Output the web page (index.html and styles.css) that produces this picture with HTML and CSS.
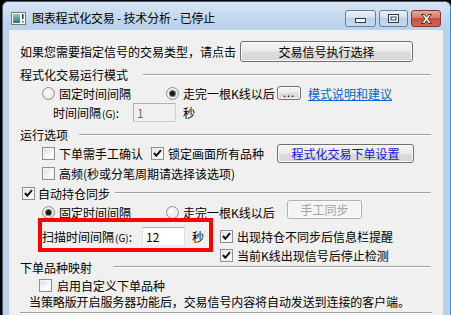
FILE: index.html
```html
<!DOCTYPE html>
<html lang="zh-CN">
<head>
  <meta charset="UTF-8">
  <title>图表程式化交易 - 技术分析 - 已停止</title>
  <link rel="stylesheet" href="styles.css">
</head>
<body>

  <div class="window">
    <!-- 标题栏 -->
    <div class="titlebar">
      <svg class="app-icon" width="15" height="13" viewBox="0 0 15 13">
        <defs>
          <linearGradient id="ig" x1="0" y1="0" x2="0" y2="1">
            <stop offset="0" stop-color="#8fd0a0"/>
            <stop offset="1" stop-color="#1f7a8c"/>
          </linearGradient>
        </defs>
        <rect x="0.5" y="0.5" width="14" height="12" fill="#fff" stroke="#7a7a7a"/>
        <rect x="2" y="2" width="7" height="9" fill="url(#ig)"/>
        <rect x="11" y="2" width="1.5" height="5" fill="#333"/>
        <rect x="11" y="9" width="1.5" height="1.5" fill="#c33"/>
      </svg>
      <span class="title">图表程式化交易 - 技术分析 - 已停止</span>
      <div class="caption-btns">
        <div class="cap cap-min">
          <svg width="31" height="17" viewBox="0 0 31 17"><rect x="10.5" y="8.5" width="10" height="4" fill="#fff" stroke="#2b3b52"/></svg>
        </div>
        <div class="cap cap-max">
          <svg width="29" height="17" viewBox="0 0 29 17"><rect x="9.5" y="4.5" width="10" height="8" fill="#fff" stroke="#2b3b52"/><rect x="12" y="7" width="5" height="3" fill="none" stroke="#2b3b52"/></svg>
        </div>
        <div class="cap cap-close">
          <svg width="30" height="17" viewBox="0 0 30 17">
            <path d="M10.5 4.5 L13.5 4.5 L15.5 7 L17.5 4.5 L20.5 4.5 L17 8.7 L20.5 13.5 L17.5 13.5 L15.5 10.5 L13.5 13.5 L10.5 13.5 L14 8.7 Z" fill="#fff" stroke="#5a2a22"/>
          </svg>
        </div>
      </div>
    </div>

    <!-- 客户区 -->
    <div class="client">
      <div class="row row-top">
        <span class="lbl-top">如果您需要指定信号的交易类型，请点击</span>
        <div class="btn btn-signal">交易信号执行选择</div>
      </div>

      <div class="grp grp-mode"><span>程式化交易运行模式</span></div>
      <div class="row opts">
        <label class="opt"><span class="rd"></span>固定时间间隔</label>
        <label class="opt opt-bar"><span class="rd on"></span>走完一根K线以后</label>
        <div class="btn btn-dots">...</div>
        <a class="link" href="#">模式说明和建议</a>
      </div>
      <div class="row row-interval">
        <span class="lbl-int">时间间隔<small>(G)</small>:</span>
        <div class="edit disabled">1</div>
        <span class="unit">秒</span>
      </div>

      <div class="grp grp-run"><span>运行选项</span></div>
      <div class="row checks">
        <label class="chk chk-a"><span class="cb"></span>下单需手工确认</label>
        <label class="chk chk-b"><span class="cb"><svg width="11" height="11" viewBox="0 0 11 11"><path d="M2 5 L4.3 7.8 L9 2.2" fill="none" stroke="#111" stroke-width="2"/></svg></span>锁定画面所有品种</label>
        <div class="btn btn-order">程式化交易下单设置</div>
      </div>
      <div class="row checks checks-2">
        <label class="chk"><span class="cb"></span>高频(秒或分笔周期请选择该选项)</label>
      </div>

      <div class="grp grp-sync">
        <span class="cb"><svg width="11" height="11" viewBox="0 0 11 11"><path d="M2 5 L4.3 7.8 L9 2.2" fill="none" stroke="#111" stroke-width="2"/></svg></span>
        <span>自动持仓同步</span>
      </div>
      <div class="row opts opts-sync">
        <label class="opt"><span class="rd on"></span>固定时间间隔</label>
        <label class="opt opt-sync"><span class="rd"></span>走完一根K线以后</label>
        <div class="btn btn-manual">手工同步</div>
      </div>
      <div class="sync-body">
        <div class="sync-left">
          <div class="row row-scan">
            <span class="lbl-scan">扫描时间间隔<small>(G)</small>:</span>
            <div class="edit">12</div>
            <span class="unit">秒</span>
          </div>
        </div>
        <div class="sync-right">
          <label class="chk"><span class="cb"><svg width="11" height="11" viewBox="0 0 11 11"><path d="M2 5 L4.3 7.8 L9 2.2" fill="none" stroke="#111" stroke-width="2"/></svg></span>出现持仓不同步后信息栏提醒</label>
          <label class="chk"><span class="cb"><svg width="11" height="11" viewBox="0 0 11 11"><path d="M2 5 L4.3 7.8 L9 2.2" fill="none" stroke="#111" stroke-width="2"/></svg></span>当前K线出现信号后停止检测</label>
        </div>
      </div>

      <div class="grp grp-map"><span>下单品种映射</span></div>
      <div class="row checks-map">
        <label class="chk"><span class="cb"></span>启用自定义下单品种</label>
      </div>
      <div class="row note">当策略版开启服务器功能后，交易信号内容将自动发送到连接的客户端。</div>
      <div class="bottom-line"></div>

      <!-- 红色标注框 -->
      <div class="highlight"></div>
    </div>
  </div>

</body>
</html>
```

FILE: styles.css
```css
/* ===== 基础 ===== */
*,*::before,*::after{box-sizing:border-box}
html,body{margin:0;padding:0}
body{
  width:451px;height:315px;
  overflow:hidden;
  background:#000;
  font-family:"Noto Sans CJK SC","Liberation Sans",sans-serif;
  font-size:12px;
  color:#000;
}

/* ===== 窗口框架 ===== */
.window{
  margin:1px 0 0 2px;
  width:449px;height:314px;
  overflow:hidden;
  border:1px solid #4e5d72;
  border-right-color:#2f8fd8;
  border-bottom:none;
  border-radius:6px 6px 0 0;
  background:#b9d1ea;
  padding:0 7px 0 6px;
}
.titlebar{
  height:28px;
  display:flex;
  align-items:flex-start;
  background:linear-gradient(#d7e5f5,#c3d7ee 60%,#b9d1ea);
  margin:0 -7px 0 -6px;
  padding:0 9px 0 8px;
  border-radius:5px 5px 0 0;
}
.app-icon{margin:10px 0 0 0;flex:none}
.title{margin:9px 0 0 6px;line-height:14px;letter-spacing:-0.2px}
.caption-btns{margin-left:auto;display:flex;gap:3px;padding-top:8px}
.cap{
  height:17px;
  border:1px solid #6b7f99;
  border-radius:3px;
  background:linear-gradient(#eaf1fa,#d3e1f1 45%,#bcd0e8 50%,#c9dbef);
  display:flex;
}
.cap svg{display:block;margin:-1px}
.cap-min{width:31px}
.cap-max{width:29px}
.cap-close{
  width:30px;
  border-color:#7a3a30;
  background:linear-gradient(#e9a99a,#d97a66 45%,#c4503a 50%,#d06a50);
}

/* ===== 客户区 ===== */
.client{
  position:relative;
  height:286px;
  background:#f0f0f0;
  padding:11px 0 0 11px;
}
.row{display:flex;align-items:center}
.row-top{height:21px}
.lbl-top{width:220px;white-space:nowrap}

/* 按钮 */
.btn{
  display:flex;align-items:center;justify-content:center;
  border:1px solid #707070;
  border-radius:3px;
  background:linear-gradient(#f4f4f4,#ebebeb 48%,#dddddd 52%,#d6d6d6);
  box-shadow:inset 0 0 0 1px #fcfcfc;
  white-space:nowrap;
  line-height:12px;
}
.btn-signal{width:173px;height:21px}
.btn-dots{width:24px;height:14px;margin-left:0;font-size:11px;letter-spacing:1px;padding-bottom:3px}
.btn-order{width:137px;height:19px;color:#1414e6}
.btn-manual{
  width:75px;height:19px;
  align-self:flex-start;margin-top:-3px;
  color:#a3a3a3;
  border-color:#adb2b5;
  background:#f4f4f4;
}

/* 分组标题 */
.grp{
  display:flex;align-items:center;
  height:19px;margin-top:3px;
  padding-right:12px;
  white-space:nowrap;
}
.grp::after{
  content:"";
  flex:1;
  border-top:1px solid #a0a0a0;
  border-bottom:1px solid #fff;
}
.grp-mode::after{margin-left:15px}
.grp-run::after{margin-left:11px}
.grp-sync{margin-top:0;height:20px}
.grp-sync .cb{margin:0 3px 0 2px}
.grp-sync::after{margin-left:5px}
.grp-map{height:12px;margin-top:-4px}
.grp-map::after{margin-left:21px}

/* 单选 */
.opts{height:18px;padding-left:22px}
.opt{display:flex;align-items:center;width:124px;white-space:nowrap}
.opt-bar{width:111px}
.opt-sync{width:121px}
.rd{
  flex:none;
  width:13px;height:13px;
  margin-right:4px;
  border:1px solid #8e8f8f;
  border-radius:50%;
  background:radial-gradient(circle at 40% 40%,#fff,#e6e6e6 70%,#d0d0d0);
  display:flex;align-items:center;justify-content:center;
}
.rd.on::after{
  content:"";
  width:5px;height:5px;border-radius:50%;
  background:#1a1a1a;
  box-shadow:0 0 0 1px #777;
}
.link{margin-left:7px;color:#0066cc;text-decoration:underline;white-space:nowrap}

/* 输入框 */
.row-interval{height:20px;padding-left:33px}
.lbl-int{width:80px;white-space:nowrap}
.lbl-int small,.lbl-scan small{font-size:10px;margin-left:1px}
.edit{
  width:43px;height:19px;
  border:1px solid;
  border-color:#abadb3 #dbdfe6 #e3e9ef #e2e3ea;
  background:#fff;
  padding:1px 0 0 3px;
  line-height:15px;
}
.edit.disabled{background:#f0f0f0;color:#6d6d6d;border-color:#b0b0b0 #cfcfcf #cfcfcf #b0b0b0}
.unit{margin-left:7px}

/* 复选 */
.checks{height:19px;padding-left:22px}
.checks-2{height:20px}
.chk{display:flex;align-items:center;white-space:nowrap}
.chk-a{width:109px}
.chk-b{width:126px}
.cb{
  flex:none;
  width:13px;height:13px;
  margin-right:4px;
  border:1px solid #8e8f8f;
  background:linear-gradient(135deg,#dcdcdc,#fdfdfd 70%);
  box-shadow:inset 0 0 0 1px #f4f4f4;
  display:flex;align-items:center;justify-content:center;
}
.cb svg{display:block}

/* 自动持仓同步 */
.opts-sync{margin-top:0}
.sync-body{display:flex;height:44px}
.sync-left{width:200px;padding:6px 0 0 22px}
.row-scan{height:19px}
.lbl-scan{width:100px;white-space:nowrap}
.sync-right{padding-top:6px;display:flex;flex-direction:column}
.sync-right .chk{height:19px}

.checks-map{height:18px;margin-top:3px;padding-left:19px}
.checks-map .cb{margin-right:5px}
.note{height:14px;padding-left:9px;white-space:nowrap;letter-spacing:-0.1px}
.bottom-line{
  margin:4px 11px 0 0;
  border-top:1px solid #a0a0a0;
  border-bottom:1px solid #fff;
}

/* ===== 红框标注 ===== */
.highlight{
  position:absolute;
  left:29px;top:188px;
  width:175px;height:34px;
  border:4px solid #ff0000;
  pointer-events:none;
}
```
